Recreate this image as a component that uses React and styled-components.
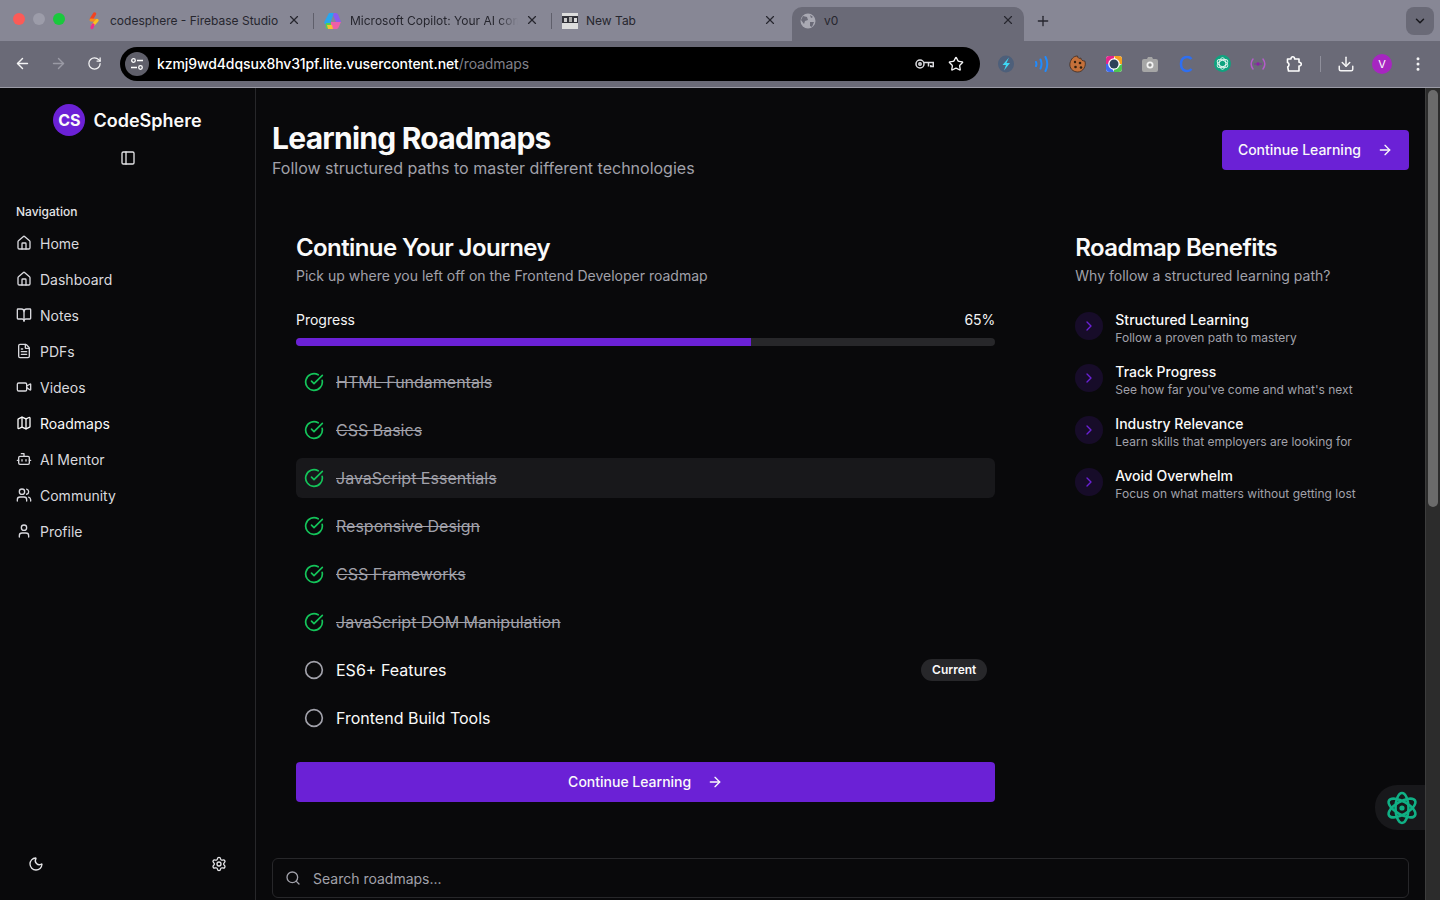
import React from 'react';
import styled, { createGlobalStyle } from 'styled-components';
import {
	ArrowLeft,
	ArrowRight,
	Bot,
	BookOpen,
	ChevronDown,
	ChevronRight,
	Circle,
	CircleCheckBig,
	Download,
	EllipsisVertical,
	FileText,
	House,
	Map as MapIcon,
	Moon,
	PanelLeft,
	Plus,
	RotateCw,
	Search,
	Settings,
	Star,
	User,
	Users,
	Video,
	X,
} from 'lucide-react';

const Global = createGlobalStyle`
	html, body {
		margin: 0;
		height: 100%;
		overflow: hidden;
		background: #09090b;
	}
	body {
		font-family: Inter, "Liberation Sans", sans-serif;
		color: #fafafa;
	}
	* {
		box-sizing: border-box;
	}
`;

const Window = styled.div`
	width: 1440px;
	height: 900px;
	display: flex;
	flex-direction: column;
	overflow: hidden;
`;

/* browser chrome */
const TabStrip = styled.div`
	height: 41px;
	background: #878795;
	display: flex;
	align-items: flex-end;
	padding-left: 78px;
	position: relative;
`;

const Lights = styled.div`
	position: absolute;
	left: 13px;
	top: 13px;
	display: flex;
	gap: 8px;
`;

const Light = styled.span`
	width: 12px;
	height: 12px;
	border-radius: 50%;
	background: ${(props) => props.$color};
`;

const Tab = styled.div`
	width: 232px;
	height: 34px;
	margin-right: 6px;
	display: flex;
	align-items: center;
	padding-left: 8px;
	padding-bottom: 7px;
	gap: 8px;
	position: relative;
	font-size: 12px;
	color: #26262e;
	border-radius: 10px 10px 0 0;
	background: ${(props) => (props.$active ? '#6a6a77' : 'transparent')};

	${(props) =>
		props.$sep
			? `&::after {
		content: '';
		position: absolute;
		right: -4px;
		top: 6px;
		height: 16px;
		width: 1px;
		background: #5f5f6b;
	}`
			: ''}
`;

const TabTitle = styled.span`
	white-space: nowrap;
	${(props) =>
		props.$fade
			? `mask-image: linear-gradient(to right, #000 148px, transparent 168px);`
			: ''}
`;

const TabClose = styled.span`
	position: absolute;
	left: 216px;
	top: 13px;
	transform: translate(-50%, -50%);
	display: flex;
	color: #26262e;
`;

const NewTab = styled.span`
	margin-left: 5px;
	height: 34px;
	padding-bottom: 7px;
	display: flex;
	align-items: center;
	color: #26262e;
`;

const TabMenu = styled.span`
	position: absolute;
	right: 6px;
	top: 7px;
	width: 28px;
	height: 28px;
	border-radius: 8px;
	background: #6a6a77;
	display: flex;
	align-items: center;
	justify-content: center;
	color: #17171c;
`;

const Toolbar = styled.div`
	height: 47px;
	background: #6a6a77;
	border-bottom: 1px solid #9b9ba6;
	display: flex;
	align-items: center;
	padding: 0 4px 1px;
	color: #f4f4f5;
`;

const ToolButton = styled.span`
	width: ${(props) => (props.$narrow ? '28px' : '36px')};
	height: 34px;
	flex: none;
	display: flex;
	align-items: center;
	justify-content: center;
	color: ${(props) => (props.$dim ? '#9a9aa5' : '#f4f4f5')};
`;

const UrlBar = styled.div`
	width: 860px;
	height: 34px;
	margin: 0 8px;
	border-radius: 17px;
	background: #000;
	display: flex;
	align-items: center;
	padding: 0 6px 0 5px;
	font-size: 14px;
	font-weight: 500;
`;

const SiteChip = styled.span`
	width: 24px;
	height: 24px;
	border-radius: 50%;
	background: #5f5f6a;
	display: flex;
	align-items: center;
	justify-content: center;
	margin-right: 8px;
`;

const UrlHost = styled.span`
	color: #fff;
	letter-spacing: -0.1px;
`;

const UrlPath = styled.span`
	color: #80808a;
	font-weight: 400;
	letter-spacing: -0.1px;
	flex: 1;
`;

const ToolDivider = styled.span`
	width: 1px;
	height: 16px;
	margin: 0 7px 0 8px;
	background: #8f8f9b;
`;

const Avatar = styled.span`
	width: 20px;
	height: 20px;
	border-radius: 50%;
	background: #a726c1;
	color: #fff;
	font-size: 11px;
	display: flex;
	align-items: center;
	justify-content: center;
`;

/* page */
const Body = styled.div`
	flex: 1;
	min-height: 0;
	display: flex;
	position: relative;
`;

const Sidebar = styled.aside`
	width: 256px;
	flex: none;
	border-right: 1px solid #27272a;
	background: #09090b;
	display: flex;
	flex-direction: column;
`;

const Brand = styled.div`
	height: 48px;
	margin-top: 8px;
	display: flex;
	align-items: center;
	justify-content: center;
	gap: 8px;
`;

const Logo = styled.span`
	width: 32px;
	height: 32px;
	border-radius: 50%;
	background: #6b21d6;
	display: flex;
	align-items: center;
	justify-content: center;
	font-size: 16px;
	font-weight: 700;
`;

const BrandName = styled.span`
	font-size: 18px;
	font-weight: 600;
`;

const Collapse = styled.span`
	height: 28px;
	display: flex;
	align-items: center;
	justify-content: center;
	color: #e4e4e7;
`;

const NavLabel = styled.div`
	margin: 30px 0 3px 16px;
	height: 20px;
	line-height: 20px;
	font-size: 12px;
	font-weight: 500;
	color: #e4e4e7;
`;

const NavList = styled.nav`
	display: flex;
	flex-direction: column;
	flex: 1;
`;

const NavItem = styled.a`
	height: 36px;
	padding-left: 16px;
	display: flex;
	align-items: center;
	gap: 8px;
	font-size: 14px;
	color: ${(props) => (props.$active ? '#fafafa' : '#d9d9de')};
`;

const SideFooter = styled.div`
	height: 36px;
	margin-bottom: 18px;
	padding: 0 28px;
	display: flex;
	align-items: center;
	justify-content: space-between;
	color: #e4e4e7;
`;

const Main = styled.main`
	flex: 1;
	min-width: 0;
	padding: 32px 16px 0;
	background: #09090b;
	overflow: hidden;
`;

const PageHeader = styled.header`
	display: flex;
	align-items: center;
	justify-content: space-between;
	margin-bottom: 32px;
`;

const PageTitle = styled.h1`
	margin: 0;
	font-size: 30px;
	line-height: 36px;
	font-weight: 700;
	letter-spacing: -0.75px;
`;

const PageSub = styled.p`
	margin: 0;
	font-size: 16px;
	line-height: 24px;
	color: #a1a1aa;
`;

const PrimaryButton = styled.button`
	height: 40px;
	padding: 0 16px;
	width: ${(props) => (props.$wide ? '100%' : 'auto')};
	border: 0;
	border-radius: 4px;
	background: #6b21d6;
	color: #fafafa;
	font: 500 14px Inter, sans-serif;
	display: flex;
	align-items: center;
	justify-content: center;
	gap: 16px;
`;

const ButtonLabel = styled.span`
	margin-bottom: 2px;
`;

const Grid = styled.div`
	display: grid;
	grid-template-columns: repeat(3, 1fr);
	gap: 32px;
	margin-bottom: 32px;
`;

const Card = styled.section`
	padding: 24px;
	grid-column: span ${(props) => props.$span || 1};
`;

const CardTitle = styled.h2`
	margin: 0;
	font-size: 24px;
	line-height: 24px;
	font-weight: 600;
	letter-spacing: -0.6px;
`;

const CardSub = styled.p`
	margin: 6px 0 24px;
	font-size: 14px;
	line-height: 20px;
	color: #a1a1aa;
`;

const ProgressHead = styled.div`
	display: flex;
	justify-content: space-between;
	font-size: 14px;
	line-height: 20px;
	color: #f4f4f5;
	margin-bottom: 8px;
`;

const Track = styled.div`
	height: 8px;
	border-radius: 4px;
	background: #27272a;
	overflow: hidden;
	margin-bottom: 16px;
`;

const Fill = styled.div`
	height: 100%;
	background: #6b21d6;
`;

const Steps = styled.ul`
	list-style: none;
	margin: 0 0 24px;
	padding: 0;
	display: flex;
	flex-direction: column;
	gap: 8px;
`;

const Step = styled.li`
	height: 40px;
	padding: 0 8px;
	border-radius: 6px;
	display: flex;
	align-items: center;
	gap: 12px;
	background: ${(props) => (props.$hover ? '#18181b' : 'transparent')};
`;

const StepName = styled.span`
	flex: 1;
	font-size: 16px;
	color: ${(props) => (props.$done ? '#a1a1aa' : '#fafafa')};
	text-decoration: ${(props) => (props.$done ? 'line-through' : 'none')};
`;

const Badge = styled.span`
	height: 22px;
	padding: 0 11px;
	border-radius: 11px;
	background: #27272a;
	font-size: 12px;
	font-weight: 600;
	line-height: 22px;
`;

const Benefits = styled.div`
	display: flex;
	flex-direction: column;
	gap: 16px;
`;

const Benefit = styled.div`
	display: flex;
	gap: 12px;
`;

const BenefitDot = styled.span`
	width: 28px;
	height: 28px;
	margin-top: 2px;
	flex: none;
	border-radius: 50%;
	background: rgba(107, 33, 214, 0.15);
	color: #6b21d6;
	display: flex;
	align-items: center;
	justify-content: center;
`;

const BenefitTitle = styled.div`
	font-size: 14px;
	line-height: 20px;
	font-weight: 500;
`;

const BenefitText = styled.div`
	font-size: 12px;
	line-height: 16px;
	color: #a1a1aa;
`;

const SearchBox = styled.div`
	height: 40px;
	border: 1px solid #27272a;
	border-radius: 6px;
	padding: 0 12px;
	display: flex;
	align-items: center;
	gap: 12px;
	font-size: 14px;
	color: #a1a1aa;
`;

const Scrollbar = styled.div`
	width: 15px;
	flex: none;
	background: #2c2c2c;
	border-left: 1px solid #3d3d3d;
	padding: 2px 2px 0 2px;
`;

const Thumb = styled.div`
	height: 417px;
	border-radius: 5px;
	background: #6b6b6b;
`;

const AssistantTab = styled.div`
	position: absolute;
	right: 15px;
	top: 697px;
	width: 50px;
	height: 45px;
	border-radius: 22px 0 0 22px;
	background: #18181b;
	display: flex;
	align-items: center;
	justify-content: center;
	padding-left: 4px;
`;

/* drawings */
const FirebaseIcon = () => (
	<svg width="16" height="18" viewBox="0 0 16 18" strokeLinecap="round" fill="none">
		<path d="M8.500 2 5.500 7" stroke="#f2431f" strokeWidth="3.400" />
		<path d="M5 8 11 8.500" stroke="#f98a1c" strokeWidth="2.800" />
		<path d="M11 8.500 7 13" stroke="#f9c01f" strokeWidth="3.200" />
		<path d="M7 13 6 15.500" stroke="#ea2f8c" strokeWidth="3.200" />
	</svg>
);

const CopilotIcon = () => (
	<svg width="18" height="18" viewBox="0 0 18 18">
		<path d="M5 1h5L7 9l-1 3H1.500C.5 12 0 11 .3 10Z" fill="#28a6ee" />
		<path d="M10 1h1.500c1.500 0 2.300.8 2.800 2L17 10h-5L9 3Z" fill="#8a5cf0" />
		<path d="M2 11h5l2 6H4c-1.500 0-2-1-2.500-2Z" fill="#4fce58" />
		<path d="M7 10h10l-2.500 5.500c-.6 1.200-1.500 1.500-2.500 1.500H7Z" fill="#ed5fa8" />
		<path d="M3 13h5l1 4H4Z" fill="#f8c22c" />
	</svg>
);

const NewTabIcon = () => (
	<svg width="16" height="16" viewBox="0 0 16 16">
		<rect width="16" height="16" fill="#ddd" />
		<rect y="3" width="16" height="7" fill="#33333a" />
		<rect x="2" y="5" width="3" height="4" fill="#ccc" />
		<rect x="7" y="4" width="3" height="5" fill="#aaa" />
		<rect x="12" y="5" width="3" height="4" fill="#ddd" />
	</svg>
);

const GlobeIcon = () => (
	<svg width="16" height="16" viewBox="0 0 16 16">
		<circle cx="8" cy="8" r="7.500" fill="#a9a9b3" />
		<path d="M3 3l4 1 1 3-3 1-1 3-3-4Z M10 9l4 0-2 5-2-1Z M10 2l3 2-2 1Z" fill="#6a6a77" />
	</svg>
);

const TuneIcon = () => (
	<svg width="14" height="14" viewBox="0 0 14 14" fill="none" stroke="#fff" strokeWidth="1.300">
		<circle cx="3.500" cy="3.500" r="1.800" />
		<path d="M7 3.500h6M1 10.500h6" />
		<circle cx="10.500" cy="10.500" r="1.800" />
	</svg>
);

const KeyIcon = () => (
	<svg width="19" height="12" viewBox="0 0 19 12" fill="none" stroke="#dcdce0" strokeWidth="1.500">
		<circle cx="5" cy="6" r="4" />
		<circle cx="5" cy="6" r="1.200" />
		<path d="M9 4.500h9.300v4h-2.500V7M13.500 4.500v4" />
	</svg>
);

const BoltExt = () => (
	<svg width="16" height="18" viewBox="0 0 16 18">
		<ellipse cx="8" cy="9" rx="8" ry="8.500" fill="#4d5f7a" />
		<path d="M11 2.500 4.500 10H8l-2 5.500L12 8H8.500Z" fill="#3fd7f5" />
	</svg>
);

const WaveExt = () => (
	<svg width="16" height="18" viewBox="0 0 16 18" fill="none" stroke="#1f8bff" strokeWidth="2" strokeLinecap="round">
		<path d="M2 7c.6 1.300.6 2.700 0 4M6.500 4.500c1.400 3 1.400 6 0 9M11.500 2c2.300 4.500 2.300 9.500 0 14" />
	</svg>
);

const CookieExt = () => (
	<svg width="18" height="18" viewBox="0 0 18 18">
		<path d="M8.500 1c0 2 2 3 3.300 2 0 2 2 3 4 3 2 5-2 11-7 11S0 13 1 8c1-4 3.500-7 7.500-7Z" fill="#c4703a" stroke="#3d2a1e" strokeWidth="0.800" />
		<g fill="#33200f">
			<circle cx="6" cy="7" r="1.200" />
			<circle cx="11" cy="8" r="1.300" />
			<circle cx="6.500" cy="12" r="1.300" />
			<circle cx="12" cy="12.500" r="1.300" />
		</g>
	</svg>
);

const RingExt = () => (
	<svg width="16" height="16" viewBox="0 0 16 16" fill="none">
		<rect width="16" height="16" rx="3" fill="#fff" />
		<path d="M0 3a3 3 0 0 1 3-3h5v5L2 8H0Z" fill="#e3258d" />
		<path d="M8 0h5a3 3 0 0 1 3 3v5h-4Z" fill="#f6a11f" />
		<path d="M16 8v5a3 3 0 0 1-3 3H8v-4Z" fill="#4ec452" />
		<path d="M8 16H3a3 3 0 0 1-3-3V8h4Z" fill="#3d6bf0" />
		<circle cx="8" cy="8" r="5.800" fill="#fff" />
		<circle cx="8" cy="8" r="4.500" fill="#2f4358" />
	</svg>
);

const CameraExt = () => (
	<svg width="16" height="16" viewBox="0 0 16 16">
		<path d="M2 3h3l1-2h4l1 2h3a2 2 0 0 1 2 2v9a2 2 0 0 1-2 2H2a2 2 0 0 1-2-2V5a2 2 0 0 1 2-2Z" fill="#a6a6a6" />
		<circle cx="8" cy="9" r="3.500" fill="#f2f2f2" />
		<circle cx="8" cy="9" r="1.700" fill="#8c8c8c" />
	</svg>
);

const CExt = () => (
	<svg width="14" height="18" viewBox="0 0 14 18" fill="none" stroke="#2f6ff0" strokeWidth="2.500">
		<path d="M12.500 4C10 1 2 .8 2 9s8 8 10.500 5" />
	</svg>
);

const KnotExt = () => (
	<svg width="17" height="17" viewBox="0 0 16 16">
		<circle cx="8" cy="8" r="8" fill="#10a37f" />
		<g fill="none" stroke="#dff5ee" strokeWidth="0.900">
			<ellipse cx="8" cy="8" rx="5.500" ry="3" transform="rotate(30 8 8)" />
			<ellipse cx="8" cy="8" rx="5.500" ry="3" transform="rotate(90 8 8)" />
			<ellipse cx="8" cy="8" rx="5.500" ry="3" transform="rotate(150 8 8)" />
		</g>
	</svg>
);

const RadioExt = () => (
	<svg width="16" height="14" viewBox="0 0 16 14" fill="none" stroke="#b45cc9" strokeWidth="1.500" strokeLinecap="round">
		<path d="M3 2C.8 5 .8 9 3 12M13 2c2.200 3 2.200 7 0 10" />
		<circle cx="8" cy="7" r="1.800" fill="#8a1fa8" stroke="none" />
		<circle cx="5" cy="7" r="0.800" fill="#8a1fa8" stroke="none" />
		<circle cx="11" cy="7" r="0.800" fill="#8a1fa8" stroke="none" />
	</svg>
);

const PuzzleExt = () => (
	<svg width="18" height="18" viewBox="0 0 18 18" fill="none" stroke="#fff" strokeWidth="1.600" strokeLinejoin="round">
		<path d="M2.500 4H6c-.2-3 3.800-3 3.600 0H14v3.300c3-.2 3 3.900 0 3.700V16H3.500l-.8-4C4.500 11 4.500 8 2.500 7.500Z" />
	</svg>
);

const AssistantIcon = () => (
	<svg width="32" height="34" viewBox="0 0 32 34" fill="none" stroke="#10b085" strokeWidth="2.600">
		<ellipse cx="16" cy="17" rx="15" ry="6.500" transform="rotate(30 16 17)" />
		<ellipse cx="16" cy="17" rx="15" ry="6.500" transform="rotate(90 16 17)" />
		<ellipse cx="16" cy="17" rx="15" ry="6.500" transform="rotate(150 16 17)" />
		<circle cx="16" cy="17" r="2.600" fill="#10b085" stroke="none" />
	</svg>
);

const tabs = [
	{ title: 'codesphere - Firebase Studio', icon: <FirebaseIcon />, sep: true },
	{ title: 'Microsoft Copilot: Your AI con', icon: <CopilotIcon />, sep: true, fade: true },
	{ title: 'New Tab', icon: <NewTabIcon /> },
	{ title: 'v0', icon: <GlobeIcon />, active: true },
];

const extensions = [
	<BoltExt />,
	<WaveExt />,
	<CookieExt />,
	<RingExt />,
	<CameraExt />,
	<CExt />,
	<KnotExt />,
	<RadioExt />,
	<PuzzleExt />,
];

const navItems = [
	{ label: 'Home', icon: House },
	{ label: 'Dashboard', icon: House },
	{ label: 'Notes', icon: BookOpen },
	{ label: 'PDFs', icon: FileText },
	{ label: 'Videos', icon: Video },
	{ label: 'Roadmaps', icon: MapIcon, active: true },
	{ label: 'AI Mentor', icon: Bot },
	{ label: 'Community', icon: Users },
	{ label: 'Profile', icon: User },
];

const steps = [
	{ name: 'HTML Fundamentals', done: true },
	{ name: 'CSS Basics', done: true },
	{ name: 'JavaScript Essentials', done: true, hover: true },
	{ name: 'Responsive Design', done: true },
	{ name: 'CSS Frameworks', done: true },
	{ name: 'JavaScript DOM Manipulation', done: true },
	{ name: 'ES6+ Features', current: true },
	{ name: 'Frontend Build Tools' },
];

const benefits = [
	{ title: 'Structured Learning', text: 'Follow a proven path to mastery' },
	{ title: 'Track Progress', text: "See how far you've come and what's next" },
	{ title: 'Industry Relevance', text: 'Learn skills that employers are looking for' },
	{ title: 'Avoid Overwhelm', text: 'Focus on what matters without getting lost' },
];

const App = () => (
	<Window>
		<Global />
		<TabStrip>
			<Lights>
				<Light $color="#fb5b57" />
				<Light $color="#9c9ca9" />
				<Light $color="#19c93c" />
			</Lights>
			{tabs.map((tab) => (
				<Tab key={tab.title} $active={tab.active} $sep={tab.sep}>
					{tab.icon}
					<TabTitle $fade={tab.fade}>{tab.title}</TabTitle>
					<TabClose>
						<X size={14} />
					</TabClose>
				</Tab>
			))}
			<NewTab>
				<Plus size={16} />
			</NewTab>
			<TabMenu>
				<ChevronDown size={14} strokeWidth={2.5} />
			</TabMenu>
		</TabStrip>
		<Toolbar>
			<ToolButton>
				<ArrowLeft size={17} />
			</ToolButton>
			<ToolButton $dim>
				<ArrowRight size={17} />
			</ToolButton>
			<ToolButton>
				<RotateCw size={15} />
			</ToolButton>
			<UrlBar>
				<SiteChip>
					<TuneIcon />
				</SiteChip>
				<UrlHost>kzmj9wd4dqsux8hv31pf.lite.vusercontent.net</UrlHost>
				<UrlPath>/roadmaps</UrlPath>
				<ToolButton $narrow>
					<KeyIcon />
				</ToolButton>
				<ToolButton>
					<Star size={16} />
				</ToolButton>
			</UrlBar>
			{extensions.map((ext, i) => (
				<ToolButton key={i}>{ext}</ToolButton>
			))}
			<ToolDivider />
			<ToolButton>
				<Download size={18} />
			</ToolButton>
			<ToolButton>
				<Avatar>V</Avatar>
			</ToolButton>
			<ToolButton>
				<EllipsisVertical size={18} />
			</ToolButton>
		</Toolbar>
		<Body>
			<Sidebar>
				<Brand>
					<Logo>CS</Logo>
					<BrandName>CodeSphere</BrandName>
				</Brand>
				<Collapse>
					<PanelLeft size={16} />
				</Collapse>
				<NavLabel>Navigation</NavLabel>
				<NavList>
					{navItems.map(({ label, icon: Icon, active }) => (
						<NavItem key={label} $active={active}>
							<Icon size={16} />
							{label}
						</NavItem>
					))}
				</NavList>
				<SideFooter>
					<Moon size={16} />
					<Settings size={16} />
				</SideFooter>
			</Sidebar>
			<Main>
				<PageHeader>
					<div>
						<PageTitle>Learning Roadmaps</PageTitle>
						<PageSub>Follow structured paths to master different technologies</PageSub>
					</div>
					<PrimaryButton>
						<ButtonLabel>Continue Learning</ButtonLabel>
						<ArrowRight size={16} />
					</PrimaryButton>
				</PageHeader>
				<Grid>
					<Card $span={2}>
						<CardTitle>Continue Your Journey</CardTitle>
						<CardSub>Pick up where you left off on the Frontend Developer roadmap</CardSub>
						<ProgressHead>
							<span>Progress</span>
							<span>65%</span>
						</ProgressHead>
						<Track>
							<Fill style={{ width: '65%' }} />
						</Track>
						<Steps>
							{steps.map((step) => (
								<Step key={step.name} $hover={step.hover}>
									{step.done ? (
										<CircleCheckBig size={20} color="#14c45a" />
									) : (
										<Circle size={20} color="#a1a1aa" />
									)}
									<StepName $done={step.done}>{step.name}</StepName>
									{step.current && <Badge>Current</Badge>}
								</Step>
							))}
						</Steps>
						<PrimaryButton $wide>
							<ButtonLabel>Continue Learning</ButtonLabel>
							<ArrowRight size={16} />
						</PrimaryButton>
					</Card>
					<Card>
						<CardTitle>Roadmap Benefits</CardTitle>
						<CardSub>Why follow a structured learning path?</CardSub>
						<Benefits>
							{benefits.map((item) => (
								<Benefit key={item.title}>
									<BenefitDot>
										<ChevronRight size={16} />
									</BenefitDot>
									<div>
										<BenefitTitle>{item.title}</BenefitTitle>
										<BenefitText>{item.text}</BenefitText>
									</div>
								</Benefit>
							))}
						</Benefits>
					</Card>
				</Grid>
				<SearchBox>
					<Search size={16} />
					Search roadmaps...
				</SearchBox>
			</Main>
			<Scrollbar>
				<Thumb />
			</Scrollbar>
			<AssistantTab>
				<AssistantIcon />
			</AssistantTab>
		</Body>
	</Window>
);

export default App;
